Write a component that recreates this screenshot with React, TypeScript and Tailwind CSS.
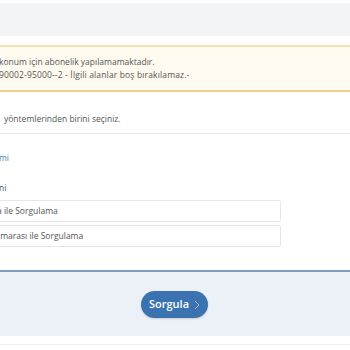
import React from "react";

export default function App() {
  return (
    <div
      className="w-[350px] h-[350px] overflow-hidden bg-white text-[#555] relative"
      style={{ fontFamily: '"Open Sans", "Noto Sans", sans-serif' }}
    >
      <div className="pt-[3px]">
        <div className="h-[33px] bg-[#f3f4f5]" />
      </div>
      <div className="mt-[9px] h-[47px] border-t-2 border-b-2 border-t-[#f6e2b0] border-b-[#f0cf86] bg-[#fffaf0] pt-[8px] text-[8.5px] leading-[13px] whitespace-nowrap">
        <div className="-ml-[1px]">konum için abonelik yapılamamaktadır.</div>
        <div className="-ml-[1px] tracking-[0.15px]">90002-95000--2 - İlgili alanlar boş bırakılamaz.-</div>
      </div>
      <div className="h-[42px] border-b border-[#ececec] pt-[20px] pl-[4px] text-[8.5px] leading-[13px] whitespace-nowrap">
        yöntemlerinden birini seçiniz.
      </div>
      <div className="pt-[17px] text-[8.5px] leading-[13px] text-[#4f82b8] -ml-[1px]">mi</div>
      <div className="pt-[17px] text-[8.5px] leading-[13px] -ml-[1px]">ni</div>
      <div className="mt-[6px] flex flex-col gap-[3px] w-[321px] -ml-[40px]">
        <div className="h-[22px] border border-[#e6e6e6] rounded-[2px] bg-white flex items-center pl-[36px] text-[8.5px] whitespace-nowrap">
          <span>a ile Sorgulama</span>
        </div>
        <div className="h-[22px] border border-[#e6e6e6] rounded-[2px] bg-white flex items-center pl-[34px] text-[8.5px] whitespace-nowrap">
          <span>umarası ile Sorgulama</span>
        </div>
      </div>
      <div className="mt-[23px] border-t-2 border-[#7d9dc2] bg-[#ecf1f8] h-[66px] flex items-start justify-center pt-[19px]">
        <button className="ml-[-1px] w-[67px] h-[27px] rounded-full bg-[#3a73b0] text-white text-[11px] font-semibold flex items-center justify-center gap-[5px] shadow-[0_1px_2px_rgba(0,0,0,0.15)]">
          <span>Sorgula</span>
          <svg width="6" height="10" viewBox="0 0 6 10" fill="none">
            <path d="M1 1l4 4-4 4" stroke="#9dbbe0" strokeWidth="1" />
          </svg>
        </button>
      </div>
      <div className="mt-[8px] border-t border-[#eef0f2]" />
    </div>
  );
}
